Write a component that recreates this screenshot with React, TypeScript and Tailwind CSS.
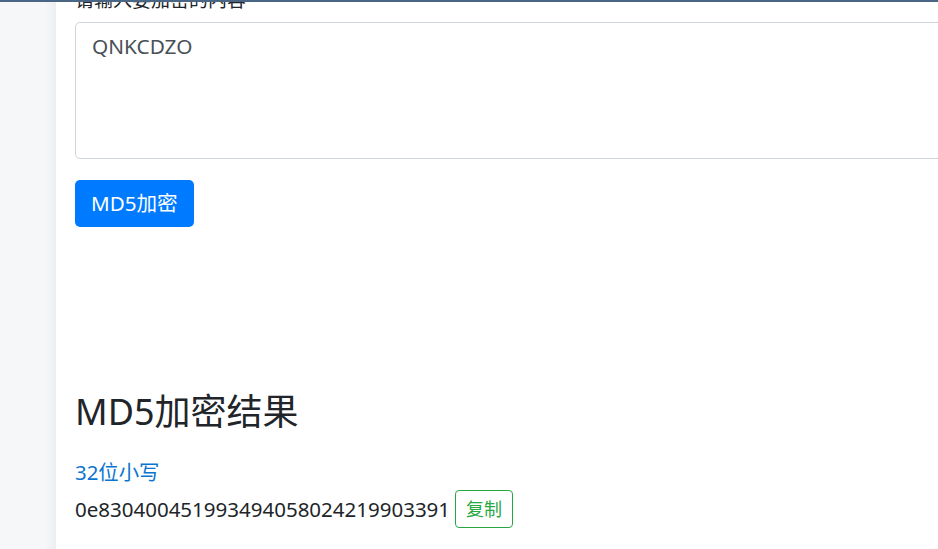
import { useState } from "react";

const FONT = "font-['Noto_Sans','Noto_Sans_CJK_SC',sans-serif]";

export default function App() {
  const [text, setText] = useState("QNKCDZO");
  const hash = "0e830400451993494058024219903391";

  return (
    <div
      className={`flex h-[549px] w-[938px] overflow-hidden border-t-2 border-[#4b6584] ${FONT}`}
    >
      <aside className="w-[56px] shrink-0 bg-gradient-to-r from-[#f6f7f9] from-80% to-[#eceef1]" />
      <main className="flex-1 overflow-hidden bg-white pl-[19px]">
        <div className="-mt-[16px] w-[1000px]">
          <label className="mb-[8px] block text-[19px] leading-[28px] text-[#212529]">
            请输入要加密的内容
          </label>
          <textarea
            value={text}
            onChange={(e) => setText(e.target.value)}
            className="block h-[137px] w-full resize-none rounded-[5px] border border-[#ced4da] px-4 py-2 text-[20.8px] leading-[30px] text-[#495057] outline-none"
          />
          <button
            type="button"
            className="mt-[21px] h-[47px] rounded-[5px] bg-[#007bff] px-[16px] text-[20.6px] text-white"
          >
            MD5加密
          </button>
        </div>

        <h1 className="mt-[163px] text-[36px] leading-[43px] font-normal text-[#212529]">
          MD5加密结果
        </h1>
        <p className="mt-[24px] text-[20.4px] leading-[30px] text-[#0b74d0]">32位小写</p>
        <div className="mt-[3px] flex items-center gap-[5px]">
          <span className="text-[20.5px] leading-[30px] text-[#212529]">{hash}</span>
          <button
            type="button"
            className="h-[38px] rounded-[4px] border border-[#28a745] px-[10px] text-[18px] leading-6 text-[#28a745]"
          >
            复制
          </button>
        </div>
      </main>
    </div>
  );
}
